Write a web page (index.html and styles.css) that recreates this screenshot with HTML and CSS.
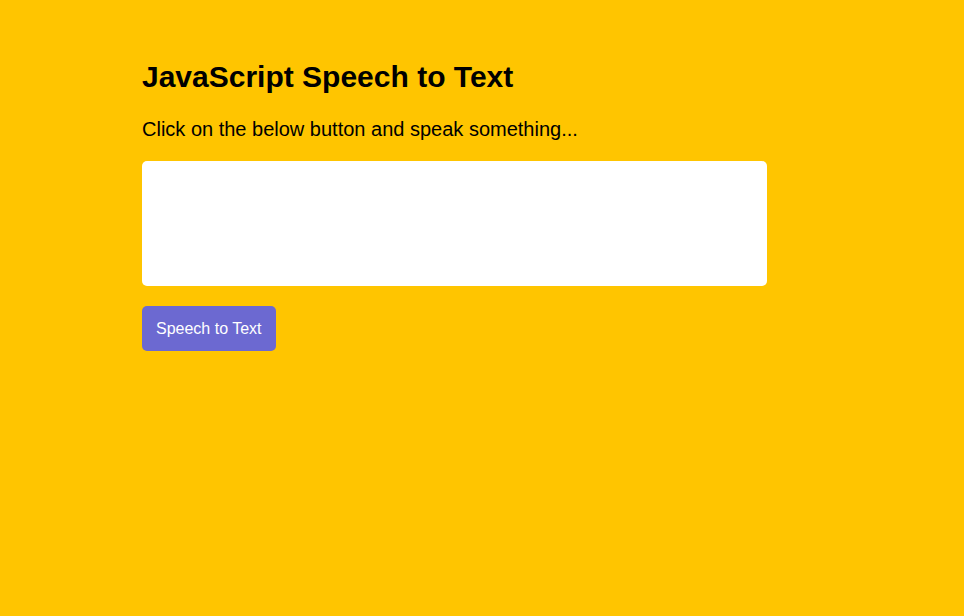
FILE: index.html
```html
<!DOCTYPE html>
<html lang="en">
<head>
<meta charset="utf-8">
<title>JavaScript Speech to Text</title>
<link rel="stylesheet" href="styles.css">
</head>
<body>
<main class="container">
  <h1 class="title">JavaScript Speech to Text</h1>
  <p class="lead">Click on the below button and speak something...</p>
  <textarea class="output" aria-label="Recognized speech"></textarea>
  <button class="btn" type="button">Speech to Text</button>
</main>
</body>
</html>
```

FILE: styles.css
```css
html, body {
  margin: 0;
  padding: 0;
  height: 100%;
}

body {
  background: #ffc500;
  font-family: "Liberation Sans", Arial, sans-serif;
  color: #000;
}

.container {
  display: flex;
  flex-direction: column;
  align-items: flex-start;
  width: 625px;
  padding: 60px 0 0 142px;
}

.title {
  margin: 0;
  font-size: 30px;
  font-weight: bold;
  line-height: 34px;
}

.lead {
  margin: 24px 0 0;
  font-size: 20px;
  line-height: 23px;
}

.output {
  display: block;
  box-sizing: border-box;
  width: 625px;
  height: 125px;
  margin-top: 20px;
  border: none;
  border-radius: 5px;
  background: #fff;
  resize: none;
  outline: none;
  padding: 10px;
  font-family: "Liberation Sans", Arial, sans-serif;
  font-size: 16px;
}

.btn {
  margin-top: 20px;
  height: 45px;
  padding: 0 14px;
  border: none;
  border-radius: 5px;
  background: #6c69d1;
  color: #fff;
  font-family: "Liberation Sans", Arial, sans-serif;
  font-size: 16px;
  cursor: pointer;
}
```
